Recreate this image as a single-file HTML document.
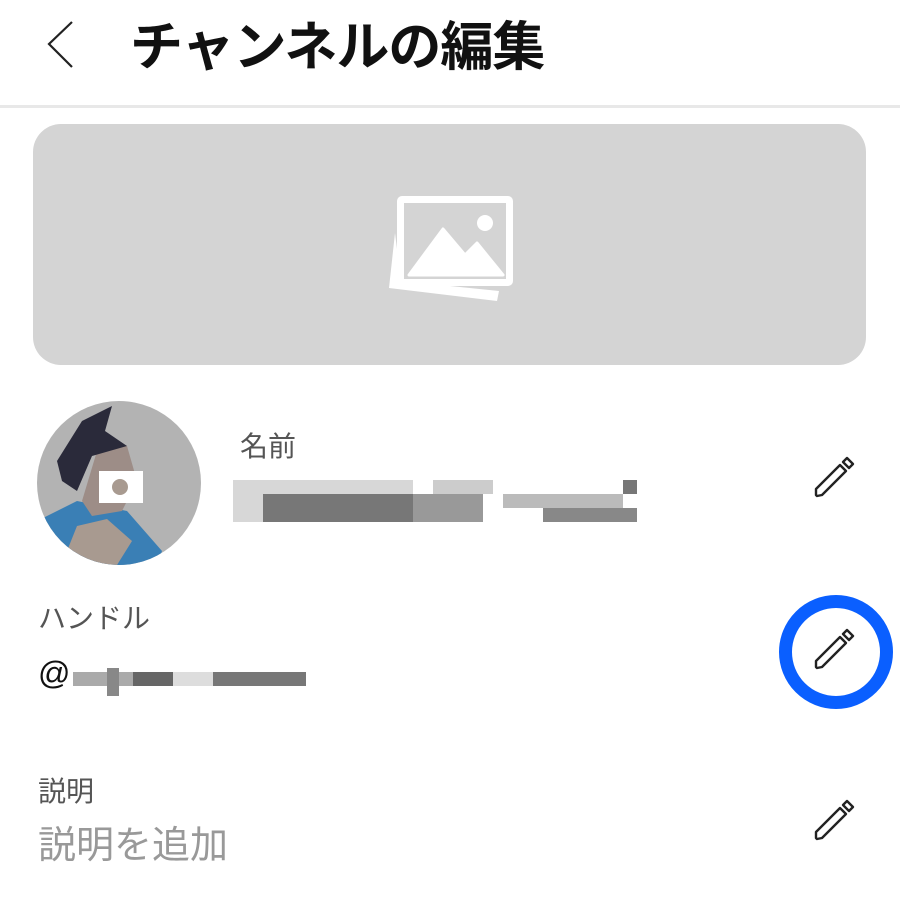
<!DOCTYPE html>
<html><head><meta charset="utf-8"><style>
body{margin:0;width:900px;height:900px;background:#fff;position:relative;overflow:hidden;font-family:"Liberation Sans","Noto Sans CJK JP",sans-serif}
.a{position:absolute}
.lbl{font-size:28px;color:#555;line-height:1}
.px{position:absolute}
</style></head><body>
<svg class="a" style="left:44px;top:20px" width="36" height="50" viewBox="0 0 36 50"><path d="M28 2 L5 24 L28 47" fill="none" stroke="#222" stroke-width="2.2"/></svg>
<div class="a" style="left:130px;top:17px;font-size:53px;font-weight:bold;color:#111;letter-spacing:-1px;line-height:62px">チャンネルの編集</div>
<div class="a" style="left:0;top:105px;width:900px;height:3px;background:#e8e8e8"></div>
<div class="a" style="left:33px;top:124px;width:833px;height:241px;border-radius:28px;background:#d4d4d4"></div>
<svg class="a" style="left:385px;top:193px" width="130" height="112" viewBox="0 0 130 112">
<path d="M10 40 L4 95 L112 108 L114 98 L16 88 Z" fill="#fff"/>
<rect x="12" y="3" width="116" height="90" rx="5" fill="#fff"/>
<rect x="19" y="10" width="102" height="76" fill="#d4d4d4"/>
<path d="M24 82 L58 36 L80 62 L92 50 L118 82 Z" fill="#fff" stroke="#fff" stroke-width="3" stroke-linejoin="round"/>
<circle cx="100" cy="30" r="8" fill="#fff"/>
</svg>
<svg class="a" style="left:37px;top:401px" width="164" height="164" viewBox="0 0 164 164">
<defs><clipPath id="c"><circle cx="82" cy="82" r="82"/></clipPath></defs>
<g clip-path="url(#c)">
<rect width="164" height="164" fill="#b3b3b3"/>
<path d="M0 120 L40 100 L90 110 L125 150 L120 164 L0 164 Z" fill="#3a7fb5"/>
<path d="M30 150 L40 125 L70 118 L95 140 L80 164 L35 164 Z" fill="#a89a90"/>
<path d="M45 100 L60 50 L90 45 L100 80 L85 110 L55 115 Z" fill="#9d8d87"/>
<path d="M20 60 L45 20 L75 5 L68 30 L90 45 L55 55 L40 90 L25 80 Z" fill="#2a2a3a"/>
<rect x="62" y="70" width="44" height="32" fill="#fff"/>
<circle cx="83" cy="86" r="8" fill="#a89a90"/>
</g></svg>
<div class="a lbl" style="left:240px;top:433px">名前</div>
<div class="a" style="left:233px;top:480px;width:404px;height:42px">
<div class="px" style="left:0;top:0;width:180px;height:42px;background:#bdbdbd;opacity:.6"></div>
<div class="px" style="left:30px;top:14px;width:150px;height:28px;background:#777"></div>
<div class="px" style="left:200px;top:0;width:60px;height:14px;background:#ccc"></div>
<div class="px" style="left:180px;top:14px;width:70px;height:28px;background:#999"></div>
<div class="px" style="left:270px;top:14px;width:120px;height:14px;background:#bbb"></div>
<div class="px" style="left:310px;top:28px;width:94px;height:14px;background:#888"></div>
<div class="px" style="left:390px;top:0;width:14px;height:14px;background:#777"></div>
</div>
<svg class="a" style="left:810px;top:455px" width="50" height="48" viewBox="0 0 50 48"><g fill="none" stroke="#222" stroke-width="2.4" stroke-linejoin="round"><path d="M6 34 L30 10 L36 16 L12 40 L7 41 L6 40 Z"/><path d="M33 7 L37 3 L43 9 L39 13 Z"/></g></svg>
<div class="a lbl" style="left:38px;top:605px">ハンドル</div>
<div class="a" style="left:38px;top:657px;font-size:32px;color:#111;line-height:1">@</div>
<div class="a" style="left:73px;top:668px;width:233px;height:28px">
<div class="px" style="left:0;top:4px;width:60px;height:14px;background:#aaa"></div>
<div class="px" style="left:34px;top:0;width:12px;height:28px;background:#888"></div>
<div class="px" style="left:60px;top:4px;width:40px;height:14px;background:#666"></div>
<div class="px" style="left:100px;top:4px;width:70px;height:14px;background:#ddd"></div>
<div class="px" style="left:140px;top:4px;width:93px;height:14px;background:#777"></div>
</div>
<div class="a" style="left:779px;top:595px;width:88px;height:88px;border:13px solid #0a5fff;border-radius:50%"></div>
<svg class="a" style="left:810px;top:627px" width="50" height="48" viewBox="0 0 50 48"><g fill="none" stroke="#222" stroke-width="2.4" stroke-linejoin="round"><path d="M6 34 L30 10 L36 16 L12 40 L7 41 L6 40 Z"/><path d="M33 7 L37 3 L43 9 L39 13 Z"/></g></svg>
<div class="a lbl" style="left:38px;top:778px">説明</div>
<div class="a" style="left:38px;top:827px;font-size:38px;color:#999;line-height:1">説明を追加</div>
<svg class="a" style="left:810px;top:798px" width="50" height="48" viewBox="0 0 50 48"><g fill="none" stroke="#222" stroke-width="2.4" stroke-linejoin="round"><path d="M6 34 L30 10 L36 16 L12 40 L7 41 L6 40 Z"/><path d="M33 7 L37 3 L43 9 L39 13 Z"/></g></svg>
</body></html>
